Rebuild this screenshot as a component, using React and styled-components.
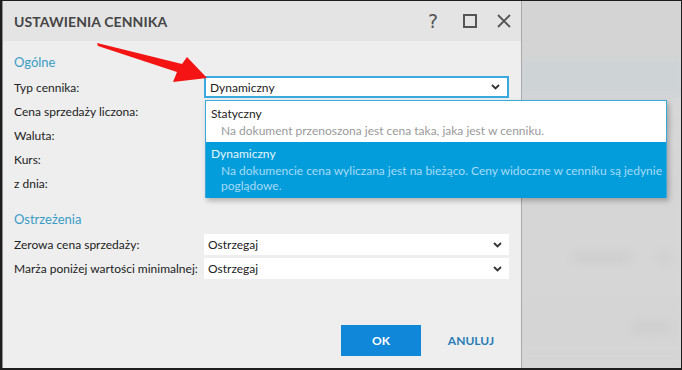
import React from "react"
import styled, { createGlobalStyle } from "styled-components"

const GlobalStyle = createGlobalStyle`
    html, body {
        margin: 0;
        padding: 0;
        background: #1c1c1c;
    }
    * {
        box-sizing: border-box;
    }
`

const Frame = styled.div`
    position: relative;
    width: 682px;
    height: 370px;
    display: flex;
    border: 1px solid #1e1e1e;
    border-left-width: 2px;
    border-bottom-width: 2px;
    background: #d5d5d5;
    overflow: hidden;
    font-family: Lato, "Noto Sans", sans-serif;
    font-size: 12px;
    color: #222;
`

const Dialog = styled.div`
    width: 520px;
    flex-shrink: 0;
    display: flex;
    flex-direction: column;
    background: #eeeeee;
    border-left: 1px solid #8f8f8f;
    border-right: 1px solid #a8a8a8;
    z-index: 1;
`

const Header = styled.div`
    height: 40px;
    display: flex;
    align-items: center;
    justify-content: space-between;
    padding: 0 10px 0 11px;
    background: #e4e4e4;
`

const Title = styled.h1`
    margin: 0;
    font-size: 14px;
    font-weight: 700;
    color: #454545;
    letter-spacing: 0.1px;
`

const HeaderIcons = styled.div`
    display: flex;
    align-items: center;
    gap: 20px;
    color: #555;
`

const Question = styled.span`
    font-size: 19px;
    line-height: 1;
    font-family: "DejaVu Sans", sans-serif;
    color: #555;
    margin-right: 5px;
`

const Body = styled.div`
    flex: 1;
    padding: 12px 11px 0 11px;
    display: flex;
    flex-direction: column;
`

const SectionTitle = styled.div`
    font-size: 13px;
    line-height: 18px;
    color: #3a9cc6;
    margin-top: ${({ marginTop }) => marginTop || "0px"};
`

const Form = styled.div`
    display: grid;
    grid-template-columns: 190px 305px;
    grid-auto-rows: ${({ rowHeight }) => rowHeight};
    row-gap: ${({ gap }) => gap || "0px"};
    margin-top: ${({ marginTop }) => marginTop || "0px"};
    align-items: center;
`

const Label = styled.div`
    font-size: 12px;
    white-space: nowrap;
`

const SelectWrap = styled.div`
    position: relative;
    height: ${({ height }) => height || "100%"};
`

const Select = styled.div`
    height: 100%;
    display: flex;
    align-items: center;
    justify-content: space-between;
    padding: 0 7px 0 4px;
    background: #fff;
    border: ${({ focused }) => focused ? "2px solid #3aa9de" : "none"};
    font-size: 12px;
`

const Chevron = () => (
    <svg width="9" height="6" viewBox="0 0 9 6">
        <path d="M1 1 L4.5 4.5 L8 1" fill="none" stroke="#333" strokeWidth="1.8" />
    </svg>
)

const Menu = styled.div`
    position: absolute;
    left: 1px;
    top: 24px;
    width: 462px;
    height: 98px;
    background: #fff;
    border: 1px solid #3aa9de;
    box-shadow: 2px 3px 5px rgba( 0, 0, 0, 0.25 );
    z-index: 5;
`

const Option = styled.div`
    padding: ${({ active }) => active ? "4px 4px 4px 5px" : "5px 4px 4px 5px"};
    background: ${({ active }) => active ? "#039ddc" : "#fff"};
    height: ${({ active }) => active ? "56px" : "41px"};
`

const OptionTitle = styled.div`
    line-height: 16px;
    color: ${({ active }) => active ? "#e8f6fd" : "#222"};
`

const OptionDesc = styled.div`
    margin-top: 1px;
    padding-left: 10px;
    line-height: 15px;
    color: ${({ active }) => active ? "#a6dbf4" : "#9a9a9a"};
`

const Footer = styled.div`
    display: flex;
    justify-content: flex-end;
    align-items: center;
    gap: 10px;
    padding: 0 10px 12px 0;
`

const Button = styled.button`
    width: 80px;
    height: 31px;
    border: none;
    font-family: Lato, "Noto Sans", sans-serif;
    font-size: 12px;
    font-weight: 700;
    background: ${({ primary }) => primary ? "#1087d8" : "transparent"};
    color: ${({ primary }) => primary ? "#fff" : "#2b7db6"};
`

const Backdrop = styled.div`
    flex: 1;
    position: relative;
    background: #d6d6d6;
    overflow: hidden;
`

const Blur = styled.div`
    position: absolute;
    inset: -10px;
    display: flex;
    flex-direction: column;
    filter: blur( 6px );
`

const Band = styled.div`
    height: ${({ h }) => h};
    background: ${({ bg }) => bg};
    display: flex;
    align-items: center;
    justify-content: space-between;
    padding: 0 20px 0 60px;
`

const Smudge = styled.div`
    width: ${({ w }) => w};
    height: 7px;
    background: #c9c9c9;
    border-radius: 4px;
`

const Arrow = styled.svg`
    position: absolute;
    left: 0;
    top: 0;
    z-index: 10;
    pointer-events: none;
`

const App = () => {
    return (
        <>
            <GlobalStyle />
            <Frame>
                <Dialog>
                    <Header>
                        <Title>USTAWIENIA CENNIKA</Title>
                        <HeaderIcons>
                            <Question>?</Question>
                            <svg width="14" height="14" viewBox="0 0 14 14">
                                <rect x="1" y="1" width="12" height="12" fill="none" stroke="#555" strokeWidth="2" />
                            </svg>
                            <svg width="14" height="14" viewBox="0 0 14 14">
                                <path d="M1 1 L13 13 M13 1 L1 13" stroke="#555" strokeWidth="1.8" />
                            </svg>
                        </HeaderIcons>
                    </Header>
                    <Body>
                        <SectionTitle>Ogólne</SectionTitle>
                        <Form rowHeight="24px" marginTop="4px">
                            <Label>Typ cennika:</Label>
                            <SelectWrap height="22px">
                                <Select focused>
                                    Dynamiczny
                                    <Chevron />
                                </Select>
                                <Menu>
                                    <Option>
                                        <OptionTitle>Statyczny</OptionTitle>
                                        <OptionDesc>Na dokument przenoszona jest cena taka, jaka jest w cenniku.</OptionDesc>
                                    </Option>
                                    <Option active>
                                        <OptionTitle active>Dynamiczny</OptionTitle>
                                        <OptionDesc active>
                                            Na dokumencie cena wyliczana jest na bieżąco. Ceny widoczne w cenniku są jedynie poglądowe.
                                        </OptionDesc>
                                    </Option>
                                </Menu>
                            </SelectWrap>
                            <Label>Cena sprzedaży liczona:</Label>
                            <div />
                            <Label>Waluta:</Label>
                            <div />
                            <Label>Kurs:</Label>
                            <div />
                            <Label>z dnia:</Label>
                            <div />
                        </Form>
                        <SectionTitle marginTop="15px">Ostrzeżenia</SectionTitle>
                        <Form rowHeight="21px" gap="3px" marginTop="6px">
                            <Label>Zerowa cena sprzedaży:</Label>
                            <SelectWrap>
                                <Select>
                                    Ostrzegaj
                                    <Chevron />
                                </Select>
                            </SelectWrap>
                            <Label>Marża poniżej wartości minimalnej:</Label>
                            <SelectWrap>
                                <Select>
                                    Ostrzegaj
                                    <Chevron />
                                </Select>
                            </SelectWrap>
                        </Form>
                    </Body>
                    <Footer>
                        <Button primary>OK</Button>
                        <Button>ANULUJ</Button>
                    </Footer>
                </Dialog>
                <Backdrop>
                    <Blur>
                        <Band h="70px" bg="#d4d4d4" />
                        <Band h="36px" bg="#ced3d6" />
                        <Band h="50px" bg="#d7d7d7">
                            <Smudge w="20px" />
                            <Smudge w="50px" />
                        </Band>
                        <Band h="70px" bg="#d6d6d6">
                            <Smudge w="40px" />
                            <Smudge w="50px" />
                        </Band>
                        <Band h="80px" bg="#d6d6d6">
                            <Smudge w="60px" />
                            <Smudge w="14px" />
                        </Band>
                        <Band h="60px" bg="#d5d5d5">
                            <div />
                            <Smudge w="40px" />
                        </Band>
                    </Blur>
                </Backdrop>
                <Arrow width="682" height="370" viewBox="0 0 682 370">
                    <polygon points="95,42 180,63 185,56 205,77 171,81 175,71 96,45" fill="#f41414" />
                </Arrow>
            </Frame>
        </>
    )
}

export default App
